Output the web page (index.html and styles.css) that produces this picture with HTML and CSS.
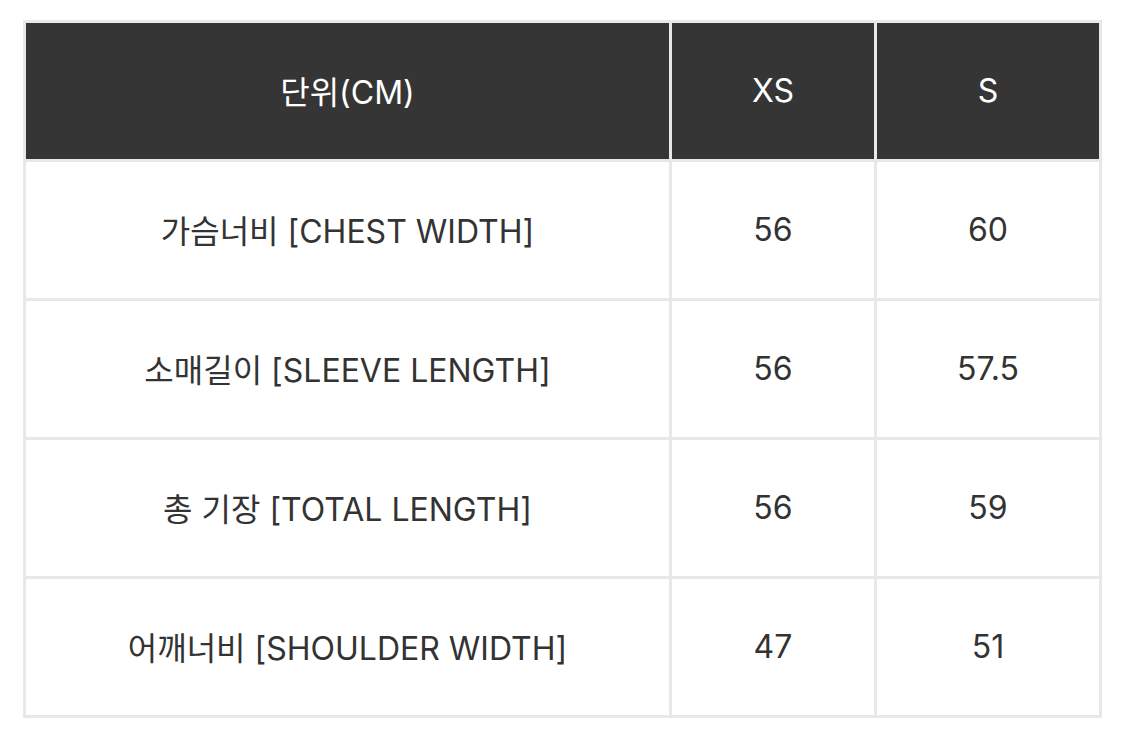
FILE: index.html
```html
<!DOCTYPE html>
<html lang="ko">
<head>
<meta charset="utf-8">
<link rel="stylesheet" href="styles.css">
</head>
<body>
<div class="table">
  <div class="cell head">단위(CM)</div>
  <div class="cell head">XS</div>
  <div class="cell head">S</div>

  <div class="cell">가슴너비 [CHEST WIDTH]</div>
  <div class="cell">56</div>
  <div class="cell">60</div>

  <div class="cell">소매길이 [SLEEVE LENGTH]</div>
  <div class="cell">56</div>
  <div class="cell">57.5</div>

  <div class="cell">총 기장 [TOTAL LENGTH]</div>
  <div class="cell">56</div>
  <div class="cell">59</div>

  <div class="cell">어깨너비 [SHOULDER WIDTH]</div>
  <div class="cell">47</div>
  <div class="cell">51</div>
</div>
</body>
</html>
```
FILE: styles.css
```css
html, body {
  margin: 0;
  padding: 0;
  background: #ffffff;
}
body {
  padding: 20px 0 0 23px;
  font-family: Inter, "Noto Sans CJK KR", sans-serif;
}
.table {
  width: 1079px;
  box-sizing: border-box;
  display: grid;
  grid-template-columns: 643px 202px 222px;
  grid-auto-rows: 136px;
  gap: 3px;
  padding: 3px;
  background: #e8e8e8;
}
.cell {
  background: #ffffff;
  color: #333333;
  font-size: 32px;
  display: flex;
  align-items: center;
  justify-content: center;
  padding-bottom: 2px;
}
.cell.head {
  background: #353535;
  color: #ffffff;
}
```
